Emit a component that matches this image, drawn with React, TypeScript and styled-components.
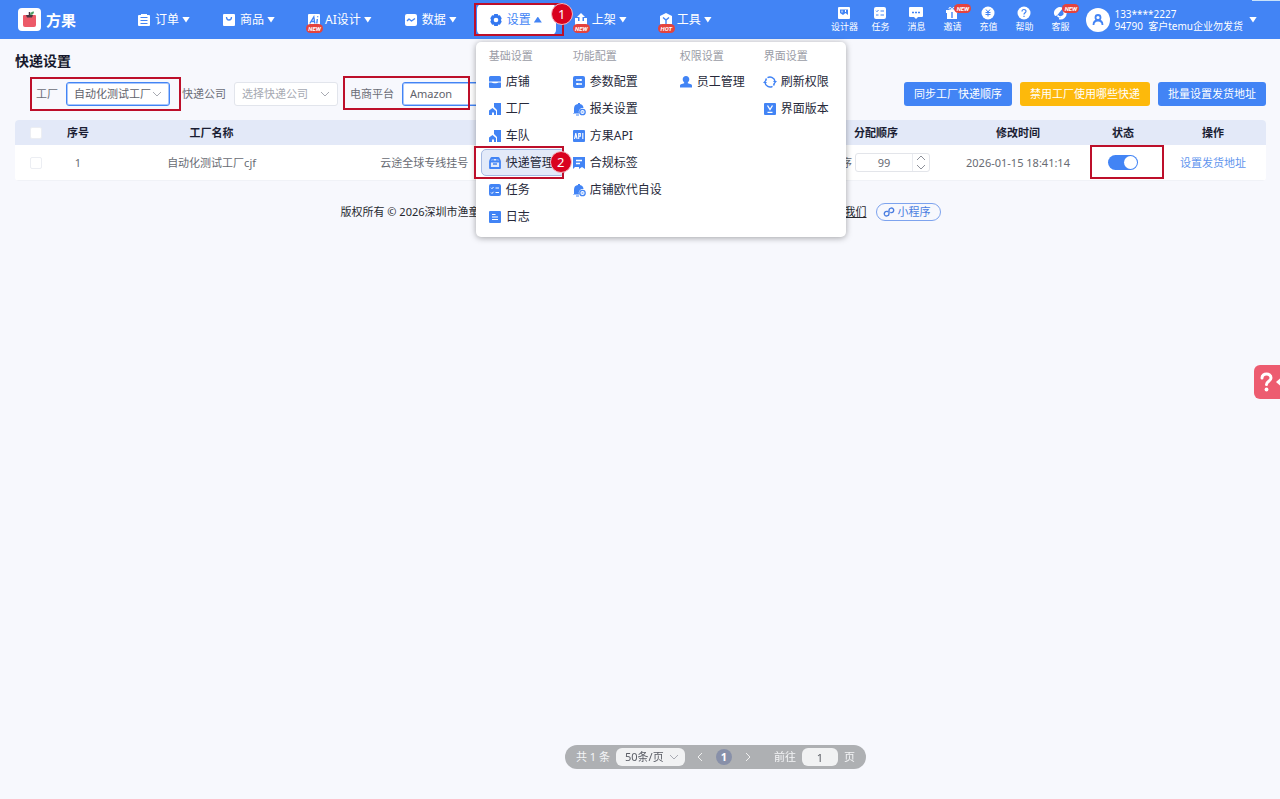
import React from "react";
import styled, { createGlobalStyle, css } from "styled-components";

const blue = "#4284f5";
const red = "#bd0f2a";

const GlobalStyle = createGlobalStyle`
  * { box-sizing: border-box; }
  body {
    margin: 0;
    background: #f7f8fd;
    color: #26293a;
    font: 11px/16px "Noto Sans", "Noto Sans CJK SC", sans-serif;
  }
  button, input, select { font: inherit; color: inherit; margin: 0; }
  button { border: 0; background: none; padding: 0; cursor: pointer; }
  a { color: inherit; text-decoration: none; }
`;

const Shell = styled.div`
  min-height: 100vh;
`;

/* ---------- shared ---------- */

const Marker = styled.span<{ $inset: string }>`
  position: absolute;
  inset: ${(p) => p.$inset};
  border: 2px solid ${red};
  pointer-events: none;
  z-index: 3;
`;

const StepDot = styled.span<{ $top: number; $left: number }>`
  position: absolute;
  top: ${(p) => p.$top}px;
  left: ${(p) => p.$left}px;
  width: 22px;
  height: 22px;
  border-radius: 50%;
  border: 1px solid #f3b9c2;
  background: #d9021f;
  color: #fff;
  font-size: 13px;
  line-height: 20px;
  text-align: center;
  pointer-events: none;
  z-index: 4;
`;

const Caret = styled.span<{ $up?: boolean }>`
  width: 8px;
  height: 6px;
  background: currentColor;
  clip-path: ${(p) =>
    p.$up ? "polygon(50% 0, 100% 100%, 0 100%)" : "polygon(0 0, 100% 0, 50% 100%)"};
`;

const Tag = styled.span<{ $corner?: boolean }>`
  position: absolute;
  left: ${(p) => (p.$corner ? "20px" : "11px")};
  top: ${(p) => (p.$corner ? "-2px" : "20px")};
  width: 17px;
  height: 9px;
  border-radius: 5px;
  background: #e5433d;
  color: #fff;
  font: italic 700 6px/9px Roboto, sans-serif;
  text-align: center;
`;

const Icon = ({ size = 14, children }: { size?: number; children: React.ReactNode }) => (
  <svg width={size} height={size} viewBox="0 0 14 14" fill="none" aria-hidden="true">
    {children}
  </svg>
);

const Chevron = ({ d, color = "#a9abb3" }: { d: string; color?: string }) => (
  <svg width="10" height="10" viewBox="0 0 10 10" fill="none" stroke={color} aria-hidden="true">
    <path d={d} />
  </svg>
);
const down = "M1 3l4 4 4-4";
const up = "M1 7l4-4 4 4";
const left = "M7 1L3 5l4 4";
const right = "M3 1l4 4-4 4";

/* ---------- header ---------- */

const Header = styled.header`
  position: relative;
  display: flex;
  align-items: center;
  height: 39px;
  padding: 0 23px 0 18px;
  background: ${blue};
  color: #fff;
  z-index: 5;
  &::after {
    content: "";
    position: absolute;
    top: 0;
    right: 0;
    width: 28px;
    height: 1px;
    background: #c9e2fa;
  }
`;

const Brand = styled.a`
  display: flex;
  align-items: center;
  gap: 5px;
  width: 107px;
  font-size: 15px;
  font-weight: 700;
  line-height: 22px;
`;

const Nav = styled.nav`
  display: flex;
  gap: 6px;
`;

const NavCell = styled.div`
  position: relative;
`;

const NavButton = styled.button<{ $active?: boolean }>`
  display: flex;
  align-items: center;
  height: 31px;
  padding: 0 14px 0 12px;
  border-radius: 5px;
  color: #fff;
  font-size: 12px;
  white-space: nowrap;
  svg { flex: none; }
  span:nth-of-type(1) { margin: 0 3px 0 4px; }
  ${(p) =>
    p.$active &&
    css`
      background: #fff;
      color: ${blue};
    `}
`;

const Tools = styled.div`
  display: flex;
  margin-left: auto;
`;

const Tool = styled.a`
  position: relative;
  display: flex;
  flex-direction: column;
  align-items: center;
  width: 36px;
  font-size: 9px;
  line-height: 12px;
  gap: 1px;
  white-space: nowrap;
`;

const Account = styled.button`
  display: flex;
  align-items: center;
  gap: 4px;
  margin-left: 8px;
  color: #fff;
  font-size: 10px;
  line-height: 12px;
  text-align: left;
  white-space: pre;
  ${Caret} { margin-left: 2px; }
`;

/* ---------- settings menu ---------- */

const Menu = styled.div`
  position: absolute;
  top: 38px;
  left: -1px;
  display: grid;
  grid-template-columns: 84px 107px 84px 84px;
  width: 370px;
  height: 195px;
  padding: 5px;
  border-radius: 5px;
  background: #fff;
  box-shadow: 0 1px 6px rgba(0, 0, 0, 0.35);
  color: #26293a;
`;

const MenuTitle = styled.div`
  padding: 0 8px;
  line-height: 17px;
  margin-bottom: 4px;
  color: #9a9ca6;
`;

const MenuLink = styled.a<{ $current?: boolean }>`
  position: relative;
  display: flex;
  align-items: center;
  gap: 4px;
  height: 27px;
  padding: 0 6px;
  border: 1px solid ${(p) => (p.$current ? "#a5b9e2" : "transparent")};
  border-radius: 5px;
  background: ${(p) => (p.$current ? "#e3eaf9" : "transparent")};
  font-size: 12px;
  white-space: nowrap;
  svg { flex: none; }
`;

/* ---------- page ---------- */

const Page = styled.main`
  padding: 12px 14px 0 15px;
`;

const Title = styled.h1`
  margin: 0;
  font-size: 14px;
  line-height: 20px;
  color: #16182c;
`;

const Toolbar = styled.div`
  display: flex;
  align-items: center;
  justify-content: space-between;
  margin-top: 11px;
  padding-left: 21px;
`;

const Filters = styled.form`
  display: flex;
  gap: 12px;
`;

const Field = styled.div`
  position: relative;
  display: flex;
  align-items: center;
  gap: 8px;
  color: #6b6e77;
  white-space: nowrap;
`;

const Picker = styled.span<{ $active?: boolean }>`
  position: relative;
  display: block;
  select {
    display: block;
    appearance: none;
    width: 104px;
    height: 24px;
    padding: 0 12px 0 7px;
    border: 1px solid ${(p) => (p.$active ? blue : "#e2e5ec")};
    box-shadow: ${(p) => (p.$active ? "inset 0 0 0 1px #a9c7fb" : "none")};
    border-radius: 3px;
    background: #fff;
    color: ${(p) => (p.$active ? "#5f626b" : "#a6a9b2")};
  }
  svg {
    position: absolute;
    right: 8px;
    top: 7px;
    pointer-events: none;
  }
`;

const Actions = styled.div`
  display: flex;
  gap: 8px;
`;

const Action = styled.button<{ $warn?: boolean }>`
  height: 24px;
  padding: 0 10px;
  border-radius: 3px;
  background: ${(p) => (p.$warn ? "#fdb90b" : blue)};
  color: #fff;
  white-space: nowrap;
`;

const Table = styled.table`
  width: 100%;
  margin-top: 14px;
  border-spacing: 0;
  table-layout: fixed;
  background: #fff;
  border-radius: 4px;
  overflow: hidden;
  color: #686b73;
  text-align: center;
  th {
    height: 25px;
    padding: 0;
    background: #e3e9f8;
    color: #1a1d33;
  }
  td {
    position: relative;
    height: 36px;
    padding: 0;
    border-bottom: 1px solid #f0f2f7;
  }
`;

const Tick = styled.input`
  appearance: none;
  display: block;
  width: 12px;
  height: 12px;
  margin: 0 auto;
  border: 1px solid #eceef3;
  border-radius: 2px;
  background: #fff;
`;

const Order = styled.div`
  display: flex;
  justify-content: center;
  align-items: center;
  gap: 3px;
  label {
    width: 30px;
    text-align: right;
  }
`;

const Stepper = styled.span`
  display: flex;
  width: 75px;
  height: 19px;
  border: 1px solid #e3e5ea;
  border-radius: 3px;
  input {
    flex: 1;
    min-width: 0;
    padding: 0;
    border: 0;
    background: none;
    text-align: center;
  }
`;

const StepButtons = styled.span`
  display: flex;
  flex-direction: column;
  width: 17px;
  border-left: 1px solid #e9ebf0;
  button {
    display: flex;
    align-items: center;
    justify-content: center;
    flex: 1;
    min-height: 0;
  }
`;

const Switch = styled.input`
  appearance: none;
  display: block;
  width: 30px;
  height: 15px;
  margin: 0 auto;
  padding: 1px;
  border-radius: 8px;
  background: ${blue};
  &::before {
    content: "";
    display: block;
    width: 13px;
    height: 13px;
    margin-left: auto;
    border-radius: 50%;
    background: #fff;
  }
`;

const TextLink = styled.a`
  color: #5f95ee;
`;

const Footer = styled.footer`
  display: flex;
  align-items: center;
  width: min(600px, 100%);
  margin: 22px auto 0;
  color: #26282f;
  a:first-of-type {
    margin-left: auto;
    margin-right: 9px;
    text-decoration: underline;
  }
`;

const MiniApp = styled.a`
  display: flex;
  align-items: center;
  gap: 3px;
  height: 18px;
  padding: 0 9px 0 6px;
  border: 1px solid #7da3ee;
  border-radius: 9px;
  color: #4a7de0;
`;

const PagerDock = styled.div`
  position: fixed;
  left: 0;
  right: 0;
  bottom: 30px;
  display: flex;
  justify-content: center;
  padding-left: 151px;
`;

const Pager = styled.nav`
  display: flex;
  align-items: center;
  height: 24px;
  padding: 0 11px;
  border-radius: 12px;
  background: #aeb0b3;
  color: #f4f5f7;
  white-space: pre;
  input {
    width: 36px;
    height: 18px;
    margin: 0 6px;
    padding: 0;
    border: 0;
    border-radius: 6px;
    background: #f1f2f3;
    color: #5a5d65;
    text-align: center;
  }
`;

const PageSize = styled.span`
  position: relative;
  margin: 0 3px 0 6px;
  select {
    display: block;
    appearance: none;
    width: 69px;
    height: 18px;
    padding: 0 9px;
    border: 0;
    border-radius: 6px;
    background: #f1f2f3;
    color: #5a5d65;
  }
  svg {
    position: absolute;
    right: 6px;
    top: 4px;
    pointer-events: none;
  }
`;

const PageButton = styled.button<{ $current?: boolean }>`
  display: flex;
  align-items: center;
  justify-content: center;
  width: 16px;
  height: 16px;
  margin: 0 4px;
  border-radius: 50%;
  background: ${(p) => (p.$current ? "#8890a9" : "none")};
  color: #fff;
  font-weight: 700;
`;

const JumpLabel = styled.label`
  margin-left: 14px;
`;

const HelpTab = styled.button`
  position: fixed;
  right: 0;
  top: 365px;
  width: 26px;
  height: 34px;
  border-radius: 6px 0 0 6px;
  background: #ed5c70;
`;

/* ---------- drawings ---------- */

const W = "#fff";

const navItems: { label: string; tag?: string; icon: React.ReactNode }[] = [
  {
    label: "订单",
    icon: (
      <>
        <path d="M2 2h2V1h6v1h2a1 1 0 0 1 1 1v9a1 1 0 0 1-1 1H2a1 1 0 0 1-1-1V3a1 1 0 0 1 1-1z" fill={W} />
        <path d="M3.500 4.500h7M3.500 7.500h7M3.500 10.500h7" stroke={blue} />
      </>
    ),
  },
  {
    label: "商品",
    icon: (
      <>
        <rect x="1" y="1" width="12" height="12" rx="1" fill={W} />
        <path d="M4.500 4c0 4 5 4 5 0" stroke={blue} strokeWidth="1.300" />
      </>
    ),
  },
  {
    label: "AI设计",
    tag: "NEW",
    icon: (
      <>
        <rect x="1" y="1" width="12" height="12" rx="1" fill={W} />
        <path d="M2.800 10.500L6.800 4l1 6.500M4.500 8.500h3M10.300 6l-.5 4.500M10.700 3.300l-.1 1" stroke={blue} strokeWidth="1.400" />
      </>
    ),
  },
  {
    label: "数据",
    icon: (
      <>
        <rect x="1" y="1" width="12" height="12" rx="2" fill={W} />
        <path d="M3 8l2-2 2.500 2L11 5.500" stroke={blue} strokeWidth="1.400" strokeLinejoin="round" />
      </>
    ),
  },
  {
    label: "设置",
    icon: (
      <>
        <path d="M5.300 1h3.400l.6 1.500 1.600-.2 1.800 2.900L11.900 7l.8 1.800-1.800 2.900-1.600-.2-.6 1.500H5.300l-.6-1.500-1.600.2-1.800-2.900L2.100 7l-.8-1.800 1.800-2.900 1.600.2z" fill="#3478f0" />
        <circle cx="7" cy="7" r="2.300" fill={W} />
      </>
    ),
  },
  {
    label: "上架",
    tag: "NEW",
    icon: (
      <>
        <path d="M1 5h3v3h6V5h3v8H1z" fill={W} />
        <path d="M7 0l4 4H8.500v5h-3V4H3z" fill={W} />
      </>
    ),
  },
  {
    label: "工具",
    tag: "HOT",
    icon: (
      <>
        <path d="M7 0l6 3v8l-6 3-6-3V3z" fill={W} />
        <path d="M4 4.500L7 7l3-2.500M7 7v4" stroke={blue} strokeWidth="1.400" />
      </>
    ),
  },
];

const tools: { label: string; tag?: boolean; icon: React.ReactNode }[] = [
  {
    label: "设计器",
    icon: (
      <>
        <rect x="1" y="1" width="12" height="12" rx="1" fill={W} />
        <path d="M3 3.500h8V9L8.500 7 6 9 3 7z" fill={blue} />
        <path d="M5 4.500v2M8.500 4v2" stroke={W} />
      </>
    ),
  },
  {
    label: "任务",
    icon: (
      <>
        <rect x="1" y="1" width="12" height="12" rx="2" fill={W} />
        <path d="M3 4.700l1 1L5.500 4M7.500 5H11M3 9h2.500M7.500 9H11" stroke={blue} />
      </>
    ),
  },
  {
    label: "消息",
    icon: (
      <>
        <path d="M1 1h12a1 1 0 0 1 1 1v8a1 1 0 0 1-1 1H9l-2 2-2-2H1a1 1 0 0 1-1-1V2a1 1 0 0 1 1-1z" fill={W} />
        <path d="M3 6.500h2M6 6.500h2M9 6.500h2" stroke={blue} strokeWidth="1.400" />
      </>
    ),
  },
  {
    label: "邀请",
    tag: true,
    icon: (
      <>
        <path d="M1 4h12v3h-1v6H2V7H1z" fill={W} />
        <path d="M7 4C4 4 3 1.500 5 1.500S7 4 7 4s0-2.500 2-2.500S10 4 7 4z" stroke={W} />
        <path d="M7 6v6" stroke={blue} strokeWidth="1.400" />
      </>
    ),
  },
  {
    label: "充值",
    icon: (
      <>
        <circle cx="7" cy="7" r="6.500" fill={W} />
        <path d="M5 3.500l2 2.500 2-2.500M7 6v4.500M4.500 6.500h5M4.500 8.500h5" stroke={blue} />
      </>
    ),
  },
  {
    label: "帮助",
    icon: (
      <>
        <circle cx="7" cy="7" r="6.500" fill={W} />
        <path d="M5 5.500c0-2.700 4-2.500 4-.3C9 6.700 7 6.700 7 8.500M7 9.700v1.300" stroke={blue} strokeWidth="1.200" />
      </>
    ),
  },
  {
    label: "客服",
    tag: true,
    icon: (
      <>
        <path d="M1 8a6 6 0 0 1 9-6L4 9.500 2 10z" fill={W} />
        <path d="M4.500 9.500a3.500 3.500 0 0 0 6-4.500M6 12.500c4 1 7-2 7-6" stroke={W} strokeWidth="1.600" />
      </>
    ),
  },
];

const B = blue;
const building = (
  <>
    <path d="M6 1h7v12H9V8L6 5z" fill={B} />
    <path d="M1 13V8.500L4.500 6 8 9v4H6v-2.500H4V13z" fill={B} />
  </>
);
const bell = (
  <>
    <path d="M2 11V6.500a4.500 4.500 0 0 1 4-4.400V1h2v1.100a4.500 4.500 0 0 1 3.500 4A4 4 0 0 0 7 11.500H1V11z" fill={B} />
    <circle cx="10.500" cy="10" r="2.700" stroke={B} strokeWidth="1.300" />
    <path d="M9.500 10h2M4 13h3" stroke={B} />
  </>
);
const list = (
  <>
    <rect x="1" y="1" width="12" height="12" rx="2" fill={B} />
    <path d="M3 4.700l1 1L5.500 4M7.500 5H11M3 9.500l1 1 1.500-1.700M7.500 9.500H11" stroke={W} />
  </>
);

const menu: { title: string; items: { label: string; current?: boolean; icon: React.ReactNode }[] }[] = [
  {
    title: "基础设置",
    items: [
      {
        label: "店铺",
        icon: (
          <>
            <path d="M2.500 1h9A1.500 1.500 0 0 1 13 2.500V6.500H1V2.500A1.500 1.500 0 0 1 2.500 1z" fill={B} />
            <path d="M1 7.500h2.500c1 1 6 1 7 0H13V12a1 1 0 0 1-1 1H2a1 1 0 0 1-1-1z" fill={B} />
          </>
        ),
      },
      { label: "工厂", icon: building },
      { label: "车队", icon: building },
      {
        label: "快递管理",
        current: true,
        icon: (
          <>
            <path d="M2 5.500h10V12H2zM2 5l1.500-3h7L12 5" stroke={B} strokeWidth="1.800" strokeLinejoin="round" />
            <path d="M5 1v4M9 1v4M5 8h4" stroke={B} strokeWidth="1.300" />
          </>
        ),
      },
      { label: "任务", icon: list },
      {
        label: "日志",
        icon: (
          <>
            <rect x="1" y="1" width="12" height="12" rx="1" fill={B} />
            <path d="M4 4.500h3.500M4 7h6M4 9.500h6" stroke={W} strokeWidth="1.200" />
          </>
        ),
      },
    ],
  },
  {
    title: "功能配置",
    items: [
      {
        label: "参数配置",
        icon: (
          <>
            <rect x="1" y="1" width="12" height="12" rx="2" fill={B} />
            <path d="M4 5h6M4 9h6M8.500 4v2M5.500 8v2" stroke={W} strokeWidth="1.300" />
          </>
        ),
      },
      { label: "报关设置", icon: bell },
      {
        label: "方果API",
        icon: (
          <>
            <rect x="1" y="1" width="12" height="12" rx="1" fill={B} />
            <path d="M2.500 10l1.300-6 1.300 6M3 8h1.700M6.700 10V4.500h1.600v2.700H6.700M10.800 4v6" stroke={W} strokeWidth="1.100" />
          </>
        ),
      },
      {
        label: "合规标签",
        icon: (
          <>
            <path d="M1 1h12v12l-3-2-3 2v-2H3l-2 2z" fill={B} />
            <path d="M4 4.500h6M4 7.500h4" stroke={W} strokeWidth="1.300" />
          </>
        ),
      },
      { label: "店铺欧代自设", icon: bell },
    ],
  },
  {
    title: "权限设置",
    items: [
      {
        label: "员工管理",
        icon: (
          <path d="M7 1c2 0 3.300 1.300 3.300 3.300 0 1.400-.6 2.400-1.500 3.200v.8L12 9.300c.8.300 1 .8 1 1.700v1.500H1V11c0-.9.200-1.400 1-1.700l3.200-1v-.8C4.300 6.700 3.700 5.700 3.700 4.300 3.700 2.300 5 1 7 1z" fill={B} />
        ),
      },
    ],
  },
  {
    title: "界面设置",
    items: [
      {
        label: "刷新权限",
        icon: (
          <>
            <path d="M4.500 2.700A5 5 0 0 1 12 6.500M9.500 11.300A5 5 0 0 1 2 7.500" stroke={B} strokeWidth="1.500" />
            <path d="M2.700 6a4.500 4.500 0 0 1 .8-2.500M11.300 8a4.500 4.500 0 0 1-.8 2.500" stroke={B} strokeWidth="1.500" />
            <path d="M10 6h4l-2 2.500zM0 8h4L2 5.500z" fill={B} />
          </>
        ),
      },
      {
        label: "界面版本",
        icon: (
          <>
            <rect x="1" y="1" width="12" height="12" rx="1" fill={B} />
            <path d="M4.500 3.500L7 7.500l2.500-4M4.500 10.300h5" stroke={W} strokeWidth="1.300" />
          </>
        ),
      },
    ],
  },
];

const Logo = () => (
  <svg width="23" height="23" viewBox="0 0 23 23" fill="none" aria-hidden="true">
    <rect width="23" height="23" rx="4" fill="#fff" />
    <path d="M6 7h11a1 1 0 0 1 1 1v9a2 2 0 0 1-2 2H7a2 2 0 0 1-2-2V8a1 1 0 0 1 1-1z" fill="#ec5a68" />
    <path d="M8 7h7l-1 2.500H9z" fill="#4a3541" />
    <path d="M11.500 9V4" stroke="#4a3541" strokeWidth="1.500" />
    <path d="M12 7c0-2 1.500-3.500 4-3.500C16 6 14.500 7 12 7z" fill="#4d9d64" />
  </svg>
);

const Avatar = () => (
  <svg width="24" height="24" viewBox="0 0 24 24" fill="none" aria-hidden="true">
    <circle cx="12" cy="12" r="12" fill="#fff" />
    <circle cx="12" cy="9.500" r="2.500" stroke={blue} strokeWidth="1.800" />
    <path d="M7.500 17c0-2.500 1.500-4.500 4.500-4.500s4.500 2 4.500 4.500" stroke={blue} strokeWidth="1.800" />
  </svg>
);

/* ---------- app ---------- */

const SettingsMenu = () => (
  <Menu>
    {menu.map((col) => (
      <div key={col.title}>
        <MenuTitle>{col.title}</MenuTitle>
        {col.items.map((item) => (
          <MenuLink key={item.label} href="#" $current={item.current}>
            <Icon>{item.icon}</Icon>
            {item.label}
            {item.current && (
              <>
                <Marker $inset="-4px 0 -4px -8px" />
                <StepDot $top={1} $left={68}>2</StepDot>
              </>
            )}
          </MenuLink>
        ))}
      </div>
    ))}
  </Menu>
);

export default function App() {
  return (
    <Shell>
      <GlobalStyle />
      <Header>
        <Brand href="#">
          <Logo />
          方果
        </Brand>
        <Nav>
          {navItems.map((item) => {
            const active = item.label === "设置";
            return (
              <NavCell key={item.label}>
                <NavButton type="button" $active={active}>
                  <Icon>{item.icon}</Icon>
                  <span>{item.label}</span>
                  <Caret $up={active} />
                </NavButton>
                {item.tag && <Tag>{item.tag}</Tag>}
                {active && (
                  <>
                    <SettingsMenu />
                    <Marker $inset="-1px -8px -1px -3px" />
                    <StepDot $top={-1} $left={74}>1</StepDot>
                  </>
                )}
              </NavCell>
            );
          })}
        </Nav>
        <Tools>
          {tools.map((t) => (
            <Tool key={t.label} href="#">
              <Icon>{t.icon}</Icon>
              {t.label}
              {t.tag && <Tag $corner>NEW</Tag>}
            </Tool>
          ))}
        </Tools>
        <Account type="button">
          <Avatar />
          <span>{"133****2227\n94790  客户temu企业勿发货"}</span>
          <Caret />
        </Account>
      </Header>

      <Page>
        <Title>快递设置</Title>
        <Toolbar>
          <Filters>
            <Field>
              <label htmlFor="factory">工厂</label>
              <Picker $active>
                <select id="factory">
                  <option>自动化测试工厂</option>
                </select>
                <Chevron d={down} />
              </Picker>
              <Marker $inset="-5px -11px -5px -6px" />
            </Field>
            <Field>
              <label htmlFor="express">快递公司</label>
              <Picker>
                <select id="express">
                  <option>选择快递公司</option>
                </select>
                <Chevron d={down} />
              </Picker>
            </Field>
            <Field>
              <label htmlFor="platform">电商平台</label>
              <Picker $active>
                <select id="platform">
                  <option>Amazon</option>
                </select>
                <Chevron d={down} />
              </Picker>
              <Marker $inset="-6px 36px -4px -7px" />
            </Field>
          </Filters>
          <Actions>
            <Action type="button">同步工厂快递顺序</Action>
            <Action type="button" $warn>禁用工厂使用哪些快递</Action>
            <Action type="button">批量设置发货地址</Action>
          </Actions>
        </Toolbar>

        <Table>
          <colgroup>
            <col width="42" />
            <col width="42" />
            <col width="18%" />
            <col width="16%" />
            <col />
            <col width="148" />
            <col width="136" />
            <col width="74" />
            <col width="106" />
          </colgroup>
          <thead>
            <tr>
              <th><Tick type="checkbox" aria-label="全选" /></th>
              <th>序号</th>
              <th>工厂名称</th>
              <th />
              <th />
              <th>分配顺序</th>
              <th>修改时间</th>
              <th>状态</th>
              <th>操作</th>
            </tr>
          </thead>
          <tbody>
            <tr>
              <td><Tick type="checkbox" aria-label="选择" /></td>
              <td>1</td>
              <td>自动化测试工厂cjf</td>
              <td>云途全球专线挂号</td>
              <td />
              <td>
                <Order>
                  <label htmlFor="order">顺序</label>
                  <Stepper>
                    <input id="order" defaultValue="99" />
                    <StepButtons>
                      <button type="button" aria-label="增加"><Chevron d={up} color="#8d9099" /></button>
                      <button type="button" aria-label="减少"><Chevron d={down} color="#8d9099" /></button>
                    </StepButtons>
                  </Stepper>
                </Order>
              </td>
              <td>2026-01-15 18:41:14</td>
              <td>
                <Switch type="checkbox" role="switch" defaultChecked aria-label="状态" />
                <Marker $inset="0 -4px 1px 4px" />
              </td>
              <td><TextLink href="#">设置发货地址</TextLink></td>
            </tr>
          </tbody>
        </Table>

        <Footer>
          <span>版权所有 © 2026深圳市渔童</span>
          <a href="#">我们</a>
          <MiniApp href="#">
            <svg width="12" height="12" viewBox="0 0 12 12" fill="none" aria-hidden="true">
              <path d="M4.500 5.500C2 5 .8 7 1.500 8.700c1 2 4.500 1.600 4.500-1V4.300c0-2.600 3.500-3 4.500-1C11.200 5 10 7 7.800 6.500" stroke="#4a7de0" strokeWidth="1.400" strokeLinecap="round" />
            </svg>
            小程序
          </MiniApp>
        </Footer>
      </Page>

      <HelpTab type="button" aria-label="帮助">
        <svg width="26" height="34" viewBox="0 0 26 34" fill="none" aria-hidden="true">
          <path d="M8 13c0-5.500 9-5.500 9 0 0 3.300-4.500 3.200-4.500 6.500" stroke="#fff" strokeWidth="3" strokeLinecap="round" />
          <circle cx="12.500" cy="24.500" r="1.900" fill="#fff" />
          <path d="M22 17l4-3.500v7z" fill="#fff" />
        </svg>
      </HelpTab>

      <PagerDock>
        <Pager>
          <span>共 1 条</span>
          <PageSize>
            <select aria-label="每页条数">
              <option>50条/页</option>
            </select>
            <Chevron d={down} />
          </PageSize>
          <PageButton type="button" aria-label="上一页"><Chevron d={left} color="#f0f0f0" /></PageButton>
          <PageButton type="button" $current>1</PageButton>
          <PageButton type="button" aria-label="下一页"><Chevron d={right} color="#f0f0f0" /></PageButton>
          <JumpLabel htmlFor="jump">前往</JumpLabel>
          <input id="jump" defaultValue="1" />
          <span>页</span>
        </Pager>
      </PagerDock>
    </Shell>
  );
}
